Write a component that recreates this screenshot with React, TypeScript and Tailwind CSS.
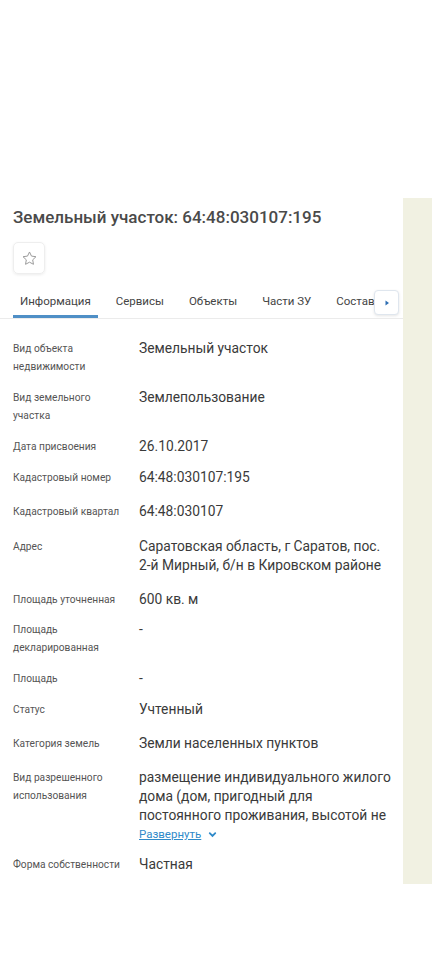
import React from 'react';

const rows: { label: string[]; value: string[]; gap: string; expand?: boolean }[] = [
  { label: ['Вид объекта', 'недвижимости'], value: ['Земельный участок'], gap: 'mt-0' },
  { label: ['Вид земельного', 'участка'], value: ['Землепользование'], gap: 'mt-[12px]' },
  { label: ['Дата присвоения'], value: ['26.10.2017'], gap: 'mt-[12px]' },
  { label: ['Кадастровый номер'], value: ['64:48:030107:195'], gap: 'mt-[12px]' },
  { label: ['Кадастровый квартал'], value: ['64:48:030107'], gap: 'mt-[15px]' },
  { label: ['Адрес'], value: ['Саратовская область, г Саратов, пос.', '2-й Мирный, б/н в Кировском районе'], gap: 'mt-[16px]' },
  { label: ['Площадь уточненная'], value: ['600 кв. м'], gap: 'mt-[15px]' },
  { label: ['Площадь', 'декларированная'], value: ['-'], gap: 'mt-[11px]' },
  { label: ['Площадь'], value: ['-'], gap: 'mt-[12px]' },
  { label: ['Статус'], value: ['Учтенный'], gap: 'mt-[12px]' },
  { label: ['Категория земель'], value: ['Земли населенных пунктов'], gap: 'mt-[15px]' },
  {
    label: ['Вид разрешенного', 'использования'],
    value: ['размещение индивидуального жилого', 'дома (дом, пригодный для', 'постоянного проживания, высотой не'],
    gap: 'mt-[15px]',
    expand: true,
  },
  { label: ['Форма собственности'], value: ['Частная'], gap: 'mt-[12px]' },
];

const tabs = ['Информация', 'Сервисы', 'Объекты', 'Части ЗУ', 'Состав'];

export default function App() {
  return (
    <div className="w-[432px] min-h-[960px] bg-white font-['Roboto',sans-serif] text-[#333]">
      <div className="h-[198px]" />
      <div className="flex">
        <div className="flex-1 min-w-0">
          {/* Header */}
          <h1 className="pl-[13px] pt-[8px] text-[17px] leading-[22px] text-[#4a4a4a] font-medium">
            Земельный участок: 64:48:030107:195
          </h1>
          <div className="pl-[13px] mt-[14px]">
            <button className="w-[32px] h-[32px] rounded-[5px] border border-[#eeeeee] shadow-[0_1px_3px_rgba(0,0,0,0.08)] flex items-center justify-center">
              <svg width="17" height="17" viewBox="0 0 24 24" fill="none" stroke="#9a9a9a" strokeWidth="1.4" strokeLinejoin="round">
                <path d="M12 2.8l2.8 5.8 6.3.9-4.6 4.4 1.1 6.3L12 17.2l-5.6 3 1.1-6.3-4.6-4.4 6.3-.9z" />
              </svg>
            </button>
          </div>

          {/* Tabs */}
          <div className="relative mt-[15px] border-b border-[#ebebeb] flex items-end pl-[13px] overflow-hidden h-[30px]">
            <div className="flex gap-[11px] whitespace-nowrap">
              {tabs.map((t, i) => (
                <div
                  key={t}
                  className={`px-[7px] pb-[5px] text-[11.5px] leading-[18px] text-[#444] ${
                    i === 0 ? 'border-b-[3px] border-[#4f8fc6]' : 'border-b-[3px] border-transparent'
                  }`}
                >
                  {t}
                </div>
              ))}
            </div>
            <div className="absolute right-[4px] top-[1px] w-[25px] h-[25px] bg-white rounded-[4px] border border-[#dfe6ee] shadow-[0_1px_3px_rgba(0,0,0,0.1)] flex items-center justify-center">
              <svg width="8" height="8" viewBox="0 0 8 8">
                <path d="M2.5 1.5L6 4 2.5 6.5z" fill="#2f6fb3" />
              </svg>
            </div>
          </div>

          {/* Rows */}
          <div className="flex flex-col pt-[20px] pb-[12px]">
            {rows.map((r, i) => (
              <div key={i} className={`flex pl-[13px] ${r.gap}`}>
                <div className="w-[126px] shrink-0 text-[10.2px] leading-[18px] text-[#555] pt-[1px]">
                  {r.label.map((l) => (
                    <div key={l}>{l}</div>
                  ))}
                </div>
                <div className="text-[13.8px] leading-[19px] text-[#3a3a3a]">
                  {r.value.map((v) => (
                    <div key={v} className="whitespace-nowrap">{v}</div>
                  ))}
                  {r.expand && (
                    <div className="flex items-center gap-[6px] text-[11.5px] leading-[18px] text-[#2f8ac9]">
                      <span className="underline">Развернуть</span>
                      <svg width="11" height="11" viewBox="0 0 12 12" fill="none" stroke="#2f8ac9" strokeWidth="2" strokeLinecap="round">
                        <path d="M3 4.5l3 3 3-3" />
                      </svg>
                    </div>
                  )}
                </div>
              </div>
            ))}
          </div>
        </div>
        <div className="w-[29px] h-[686px] bg-[#f1f1e2] shrink-0" />
      </div>
    </div>
  );
}
